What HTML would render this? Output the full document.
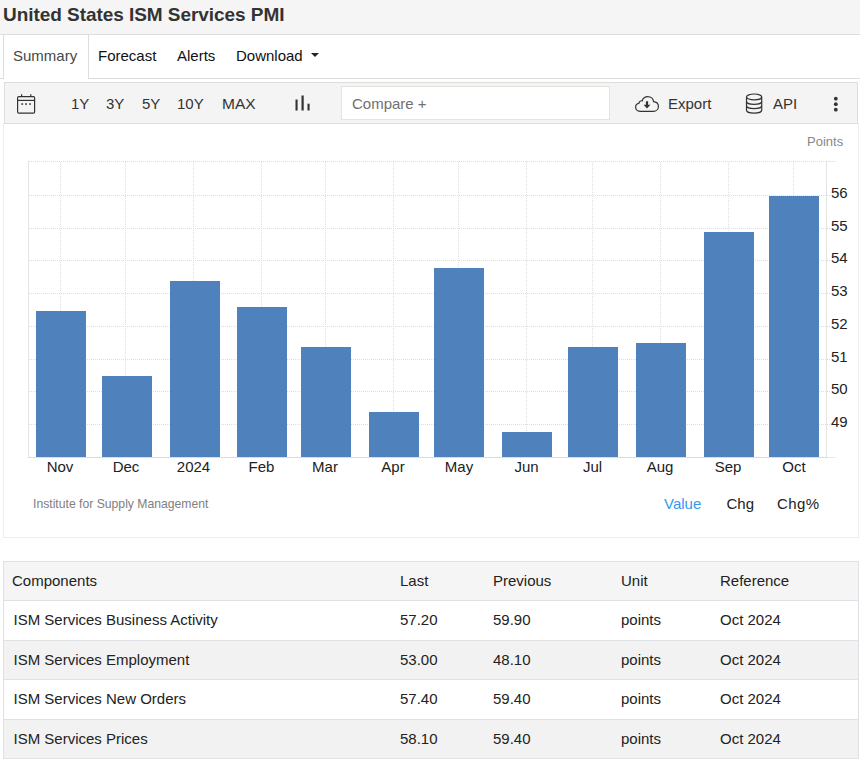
<!DOCTYPE html>
<html><head><meta charset="utf-8"><title>United States ISM Services PMI</title>
<style>
html,body{margin:0;padding:0;background:#fff;}
body{width:860px;height:761px;position:relative;overflow:hidden;font-family:"Liberation Sans",sans-serif;font-size:15px;color:#222;}
.abs{position:absolute;white-space:nowrap;}
#titlebar{position:absolute;left:0;top:0;width:860px;height:34px;background:#f5f5f5;border-bottom:1px solid #ddd;}
#title{position:absolute;left:3px;top:4px;font-size:19px;font-weight:bold;color:#333;letter-spacing:-0.05px;white-space:nowrap;line-height:22px;}
#tabline{position:absolute;left:0;top:78px;width:860px;height:1px;background:#ddd;}
#tab1{position:absolute;left:3px;top:35px;width:84px;height:44px;background:#fff;border-left:1px solid #ddd;border-right:1px solid #ddd;}
.tab{position:absolute;top:46px;line-height:20px;white-space:nowrap;color:#111;}
#toolbar{position:absolute;left:4px;top:82px;width:852px;height:40px;background:#f4f4f4;border:1px solid #ddd;}
.tb{position:absolute;top:94px;line-height:20px;white-space:nowrap;color:#333;}
#compare{position:absolute;left:341px;top:86px;width:267px;height:32px;background:#fff;border:1px solid #e4e4dc;}
#chartbox{position:absolute;left:3px;top:123px;width:854px;height:414px;border:1px solid #eee;border-top:none;}
.xl{position:absolute;top:457px;width:60px;text-align:center;line-height:20px;color:#222;}
.yl{position:absolute;left:831px;line-height:20px;color:#222;}
#thead{position:absolute;left:3px;top:561px;width:854px;height:38px;background:#f5f5f5;border:1px solid #dee2e6;}
#thead span{position:absolute;top:9px;line-height:20px;white-space:nowrap;color:#222;}
.row{position:absolute;left:3px;width:854px;border-left:1px solid #dee2e6;border-right:1px solid #dee2e6;border-bottom:1px solid #dee2e6;box-sizing:border-box;width:856px;}
.row span{position:absolute;top:9px;line-height:20px;white-space:nowrap;color:#222;}
</style></head><body>
<div id="titlebar"></div>
<div id="title">United States ISM Services PMI</div>
<div id="tabline"></div>
<div id="tab1"></div>
<div class="tab" style="left:13px;color:#484848">Summary</div>
<div class="tab" style="left:98px">Forecast</div>
<div class="tab" style="left:177px">Alerts</div>
<div class="tab" style="left:236px">Download</div>
<div class="abs" style="left:311px;top:53px;width:0;height:0;border-left:4px solid transparent;border-right:4px solid transparent;border-top:4px solid #222;"></div>
<div id="toolbar"></div>
<svg class="abs" style="left:16px;top:92px" width="22" height="24" viewBox="0 0 22 24" fill="none" stroke="#333" stroke-width="1.2">
<rect x="1.6" y="4.6" width="17" height="16.6" rx="1.2"/><line x1="1.6" y1="8.4" x2="18.6" y2="8.4"/><line x1="5.6" y1="2.2" x2="5.6" y2="4.6"/><line x1="14.8" y1="2.2" x2="14.8" y2="4.6"/>
<rect x="5.4" y="11.3" width="1.7" height="1.5" fill="#333" stroke="none"/><rect x="9.3" y="11.3" width="1.7" height="1.5" fill="#333" stroke="none"/><rect x="13.2" y="11.3" width="1.7" height="1.5" fill="#333" stroke="none"/>
</svg>
<div class="tb" style="left:71px">1Y</div>
<div class="tb" style="left:106px">3Y</div>
<div class="tb" style="left:142px">5Y</div>
<div class="tb" style="left:177px">10Y</div>
<div class="tb" style="left:222px;font-size:15.5px">MAX</div>
<svg class="abs" style="left:294px;top:94px" width="18" height="18" viewBox="0 0 18 18"><rect x="1.5" y="5.5" width="2.1" height="11" fill="#333"/><rect x="7.5" y="1.5" width="2.2" height="15" fill="#333"/><rect x="13.5" y="9.7" width="2.1" height="6.8" fill="#333"/></svg>
<div id="compare"></div>
<div class="tb" style="left:352px;color:#707070">Compare +</div>
<svg class="abs" style="left:634px;top:94px" width="27" height="20" viewBox="0 0 27 20" fill="none" stroke="#333" stroke-width="1.2">
<path d="M6.8 17.4 C3.8 17.4 1.6 15.6 1.6 13.2 C1.6 11.2 3 9.7 5 9.2 C5.3 7.6 6.6 6.6 8.2 6.8 C9 4.2 11.2 2.6 13.8 2.6 C16.8 2.6 19.2 4.8 19.6 7.6 C22.4 7.8 24.4 9.8 24.4 12.4 C24.4 15.2 22.2 17.4 19.4 17.4 Z"/>
<path d="M11.9 7.2 H14.1 V10.8 H16.4 L13 14.4 L9.6 10.8 H11.9 Z" fill="#333" stroke="none"/>
</svg>
<div class="tb" style="left:668px">Export</div>
<svg class="abs" style="left:744px;top:92px" width="20" height="24" viewBox="0 0 20 24" fill="none" stroke="#333" stroke-width="1.2">
<ellipse cx="10.1" cy="4.9" rx="7.6" ry="2.9"/><path d="M2.5 4.9 V18.2 C2.5 19.8 5.9 21.1 10.1 21.1 C14.3 21.1 17.7 19.8 17.7 18.2 V4.9"/><path d="M2.5 9.4 C2.5 11 5.9 12.3 10.1 12.3 C14.3 12.3 17.7 11 17.7 9.4"/><path d="M2.5 13.8 C2.5 15.4 5.9 16.7 10.1 16.7 C14.3 16.7 17.7 15.4 17.7 13.8"/>
</svg>
<div class="tb" style="left:773px">API</div>
<svg class="abs" style="left:831px;top:95px" width="10" height="18" viewBox="0 0 10 18"><circle cx="4.8" cy="3.7" r="1.9" fill="#333"/><circle cx="4.8" cy="9.2" r="1.9" fill="#333"/><circle cx="4.8" cy="14.7" r="1.9" fill="#333"/></svg>

<div id="chartbox"></div>
<svg style="position:absolute;left:0;top:0" width="860" height="540" shape-rendering="crispEdges">
<line x1="29" x2="827" y1="161.5" y2="161.5" stroke="#dedede" stroke-width="1" stroke-dasharray="1,1"/>
<line x1="29" x2="831" y1="195.5" y2="195.5" stroke="#dedede" stroke-width="1" stroke-dasharray="1,1"/>
<line x1="29" x2="831" y1="228.5" y2="228.5" stroke="#dedede" stroke-width="1" stroke-dasharray="1,1"/>
<line x1="29" x2="831" y1="260.5" y2="260.5" stroke="#dedede" stroke-width="1" stroke-dasharray="1,1"/>
<line x1="29" x2="831" y1="293.5" y2="293.5" stroke="#dedede" stroke-width="1" stroke-dasharray="1,1"/>
<line x1="29" x2="831" y1="326.5" y2="326.5" stroke="#dedede" stroke-width="1" stroke-dasharray="1,1"/>
<line x1="29" x2="831" y1="359.5" y2="359.5" stroke="#dedede" stroke-width="1" stroke-dasharray="1,1"/>
<line x1="29" x2="831" y1="391.5" y2="391.5" stroke="#dedede" stroke-width="1" stroke-dasharray="1,1"/>
<line x1="29" x2="831" y1="424.5" y2="424.5" stroke="#dedede" stroke-width="1" stroke-dasharray="1,1"/>
<line x1="60.5" x2="60.5" y1="162" y2="457" stroke="#dedede" stroke-width="1" stroke-dasharray="1,1"/>
<line x1="125.5" x2="125.5" y1="162" y2="457" stroke="#dedede" stroke-width="1" stroke-dasharray="1,1"/>
<line x1="193.5" x2="193.5" y1="162" y2="457" stroke="#dedede" stroke-width="1" stroke-dasharray="1,1"/>
<line x1="261.5" x2="261.5" y1="162" y2="457" stroke="#dedede" stroke-width="1" stroke-dasharray="1,1"/>
<line x1="325.5" x2="325.5" y1="162" y2="457" stroke="#dedede" stroke-width="1" stroke-dasharray="1,1"/>
<line x1="393.5" x2="393.5" y1="162" y2="457" stroke="#dedede" stroke-width="1" stroke-dasharray="1,1"/>
<line x1="458.5" x2="458.5" y1="162" y2="457" stroke="#dedede" stroke-width="1" stroke-dasharray="1,1"/>
<line x1="526.5" x2="526.5" y1="162" y2="457" stroke="#dedede" stroke-width="1" stroke-dasharray="1,1"/>
<line x1="592.5" x2="592.5" y1="162" y2="457" stroke="#dedede" stroke-width="1" stroke-dasharray="1,1"/>
<line x1="660.5" x2="660.5" y1="162" y2="457" stroke="#dedede" stroke-width="1" stroke-dasharray="1,1"/>
<line x1="728.5" x2="728.5" y1="162" y2="457" stroke="#dedede" stroke-width="1" stroke-dasharray="1,1"/>
<line x1="793.5" x2="793.5" y1="162" y2="457" stroke="#dedede" stroke-width="1" stroke-dasharray="1,1"/>
<line x1="28.5" x2="28.5" y1="161" y2="458" stroke="#e4e4e4" stroke-width="1"/>
<line x1="826.5" x2="826.5" y1="161" y2="458" stroke="#e4e4e4" stroke-width="1"/>
<line x1="28" x2="827" y1="457.5" y2="457.5" stroke="#dcdcdc" stroke-width="1"/>
<line x1="827" x2="836" y1="457.5" y2="457.5" stroke="#e8e8e8" stroke-width="1"/>
<line x1="827" x2="836" y1="161.5" y2="161.5" stroke="#e8e8e8" stroke-width="1"/>
<rect x="36" y="311" width="50" height="146" fill="#4f81bd"/>
<rect x="102" y="376" width="50" height="81" fill="#4f81bd"/>
<rect x="170" y="281" width="50" height="176" fill="#4f81bd"/>
<rect x="237" y="307" width="50" height="150" fill="#4f81bd"/>
<rect x="301" y="347" width="50" height="110" fill="#4f81bd"/>
<rect x="369" y="412" width="50" height="45" fill="#4f81bd"/>
<rect x="434" y="268" width="50" height="189" fill="#4f81bd"/>
<rect x="502" y="432" width="50" height="25" fill="#4f81bd"/>
<rect x="568" y="347" width="50" height="110" fill="#4f81bd"/>
<rect x="636" y="343" width="50" height="114" fill="#4f81bd"/>
<rect x="704" y="232" width="50" height="225" fill="#4f81bd"/>
<rect x="769" y="196" width="50" height="261" fill="#4f81bd"/>
</svg>
<div class="abs" style="left:807px;top:133px;font-size:13px;line-height:18px;color:#888">Points</div>
<div class="xl" style="left:30px">Nov</div>
<div class="xl" style="left:96px">Dec</div>
<div class="xl" style="left:163.5px">2024</div>
<div class="xl" style="left:231.5px">Feb</div>
<div class="xl" style="left:295px">Mar</div>
<div class="xl" style="left:363px">Apr</div>
<div class="xl" style="left:429px">May</div>
<div class="xl" style="left:496.5px">Jun</div>
<div class="xl" style="left:562.5px">Jul</div>
<div class="xl" style="left:630px">Aug</div>
<div class="xl" style="left:698px">Sep</div>
<div class="xl" style="left:764px">Oct</div>
<div class="yl" style="top:183px">56</div>
<div class="yl" style="top:216px">55</div>
<div class="yl" style="top:248px">54</div>
<div class="yl" style="top:281px">53</div>
<div class="yl" style="top:314px">52</div>
<div class="yl" style="top:347px">51</div>
<div class="yl" style="top:379px">50</div>
<div class="yl" style="top:412px">49</div>
<div class="abs" style="left:33px;top:495px;font-size:12.2px;line-height:18px;color:#808080">Institute for Supply Management</div>
<div class="abs" style="left:664px;top:494px;line-height:20px;color:#3397f3">Value</div>
<div class="abs" style="left:726.5px;top:494px;line-height:20px;color:#222">Chg</div>
<div class="abs" style="left:777px;top:494px;line-height:20px;color:#222;letter-spacing:0.4px">Chg%</div>

<div id="thead"><span style="left:8px">Components</span><span style="left:396px">Last</span><span style="left:489px">Previous</span><span style="left:617px">Unit</span><span style="left:716px">Reference</span></div>
<div class="row" style="top:601px;height:40px;background:#fff"><span style="left:9.5px">ISM Services Business Activity</span><span style="left:396px">57.20</span><span style="left:489px">59.90</span><span style="left:617px">points</span><span style="left:716px">Oct 2024</span></div>
<div class="row" style="top:641px;height:39px;background:#f2f2f2"><span style="left:9.5px">ISM Services Employment</span><span style="left:396px">53.00</span><span style="left:489px">48.10</span><span style="left:617px">points</span><span style="left:716px">Oct 2024</span></div>
<div class="row" style="top:680px;height:40px;background:#fff"><span style="left:9.5px">ISM Services New Orders</span><span style="left:396px">57.40</span><span style="left:489px">59.40</span><span style="left:617px">points</span><span style="left:716px">Oct 2024</span></div>
<div class="row" style="top:720px;height:39px;background:#f2f2f2"><span style="left:9.5px">ISM Services Prices</span><span style="left:396px">58.10</span><span style="left:489px">59.40</span><span style="left:617px">points</span><span style="left:716px">Oct 2024</span></div>
</body></html>
